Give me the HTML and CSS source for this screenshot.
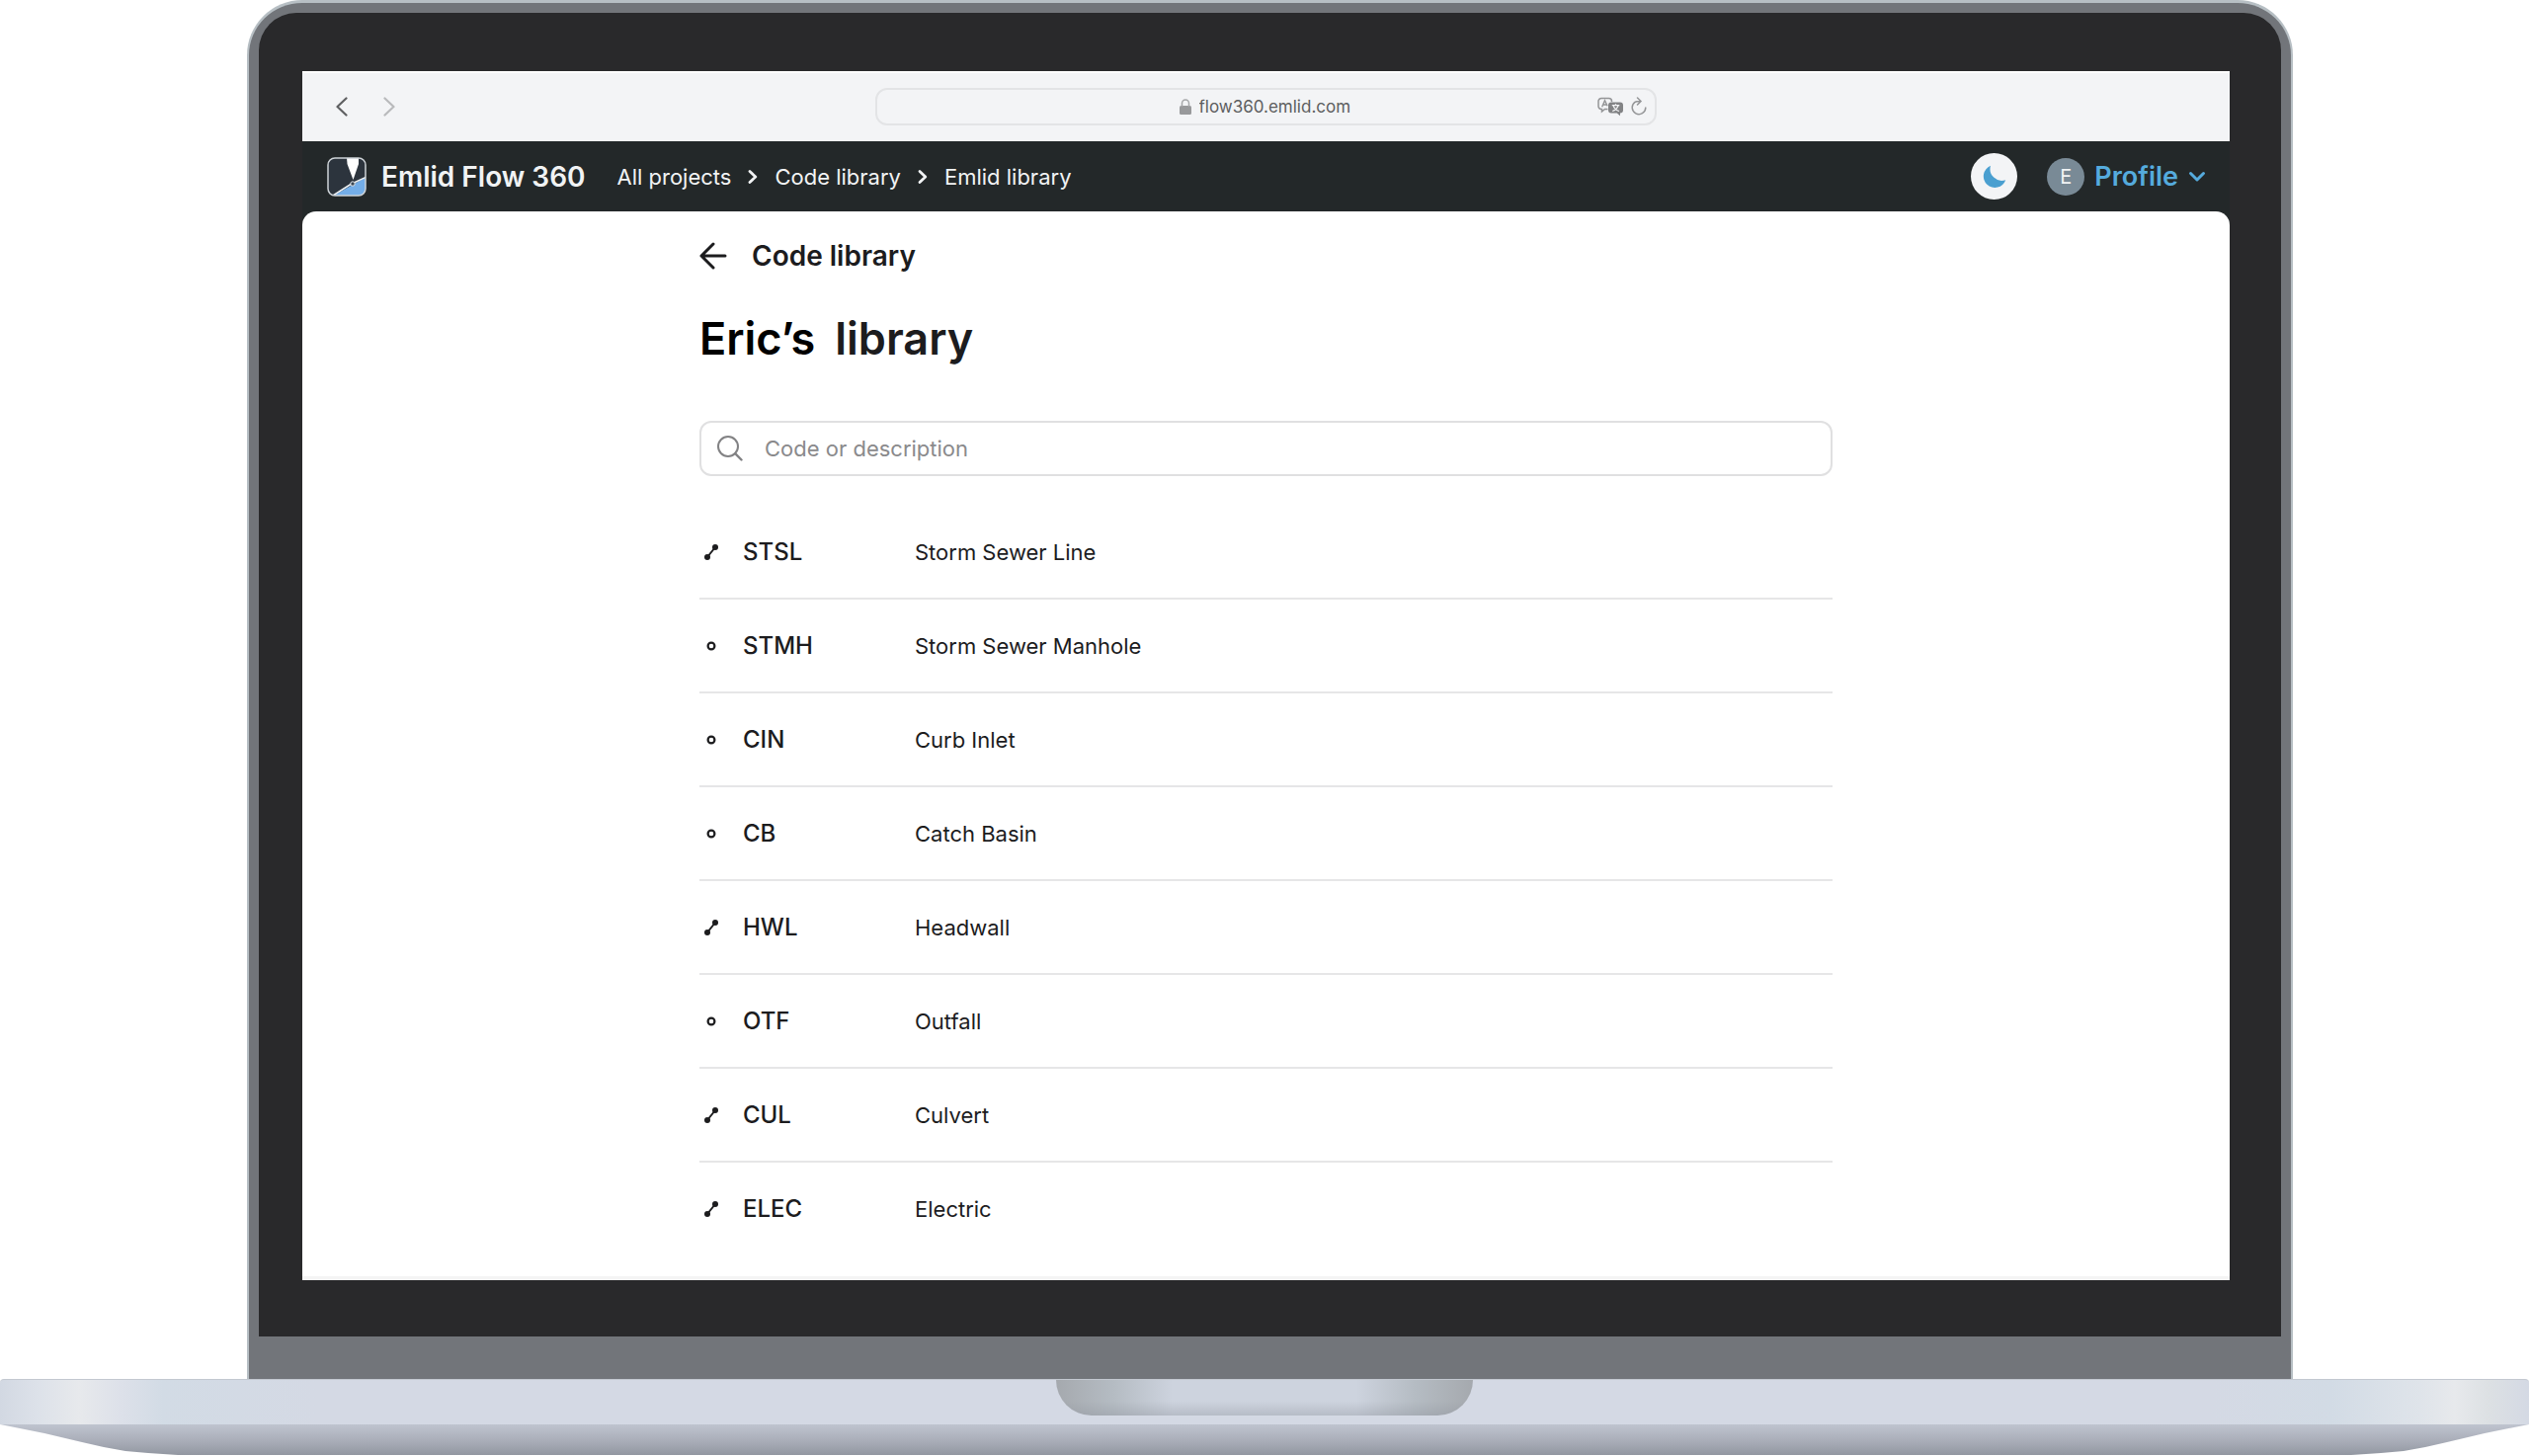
FILE: index.html
```html
<!DOCTYPE html>
<html lang="en">
<head>
<meta charset="utf-8">
<meta name="viewport" content="width=device-width, initial-scale=1">
<title>Emlid Flow 360</title>
<link rel="stylesheet" href="styles.css">
</head>
<body>
<svg width="0" height="0" class="sprite" aria-hidden="true">
  <symbol id="line" viewBox="0 0 16 18"><path d="M4 14 12 4" stroke="currentColor" stroke-width="2"/><circle cx="4" cy="14" r="3" fill="currentColor"/><circle cx="12" cy="4" r="3" fill="currentColor"/></symbol>
  <symbol id="point" viewBox="0 0 16 18"><circle cx="8" cy="9" r="3.4" fill="none" stroke="currentColor" stroke-width="2.2"/></symbol>
  <symbol id="next" viewBox="0 0 10 16"><path d="M2 2.5 7.8 8 2 13.5" fill="none" stroke="currentColor" stroke-width="2.8" stroke-linecap="round" stroke-linejoin="round"/></symbol>
</svg>
<div class="laptop">
  <div class="lid">
    <div class="bezel">
      <div class="screen">
        <div class="browser">
          <div class="history">
            <button type="button" aria-label="Back"><svg width="12" height="20" viewBox="0 0 12 20"><path d="M10.5 1.5 1.5 10l9 8.500" fill="none" stroke="#5f6062" stroke-width="2.2" stroke-linecap="round" stroke-linejoin="round"/></svg></button>
            <button type="button" aria-label="Forward"><svg width="12" height="20" viewBox="0 0 12 20"><path d="M1.500 1.500 10.500 10l-9 8.500" fill="none" stroke="#b9babc" stroke-width="2.2" stroke-linecap="round" stroke-linejoin="round"/></svg></button>
          </div>
          <div class="address">
            <div class="site">
              <svg width="12" height="16" viewBox="0 0 12 16"><rect y="7" width="12" height="9" rx="1.500" fill="#98999b"/><path d="M2.500 8V4.500a3.500 3.500 0 0 1 7 0V8" fill="none" stroke="#a6a7a9" stroke-width="1.500"/></svg>
              <input class="url" type="text" aria-label="Address" value="flow360.emlid.com">
            </div>
            <div class="tools">
              <button type="button" aria-label="Translate"><svg width="26" height="20" viewBox="0 0 26 20"><path d="M10.500 12.500H7.500L4.500 15v-2.500H4A3 3 0 0 1 1 9.500V4.500a3 3 0 0 1 3-3h7.500a3 3 0 0 1 3 3V5" fill="none" stroke="#949597" stroke-width="1.500"/><path d="m4.700 10.200 2.800-6.500 2.600 5.500M5.600 8h3.800" fill="none" stroke="#949597" stroke-width="1.400"/><path d="M14 5.500h9a3 3 0 0 1 3 3v5a3 3 0 0 1-3 3v2.700l-3.300-2.700H14a3 3 0 0 1-3-3v-5a3 3 0 0 1 3-3z" fill="#828385"/><path d="M14.800 8.700h7.500M18.500 7.200v1.500M21 9c-1 2.800-3 4.600-5.800 5.500M16.200 9.200c1 2.600 3 4.500 5.800 5.300" fill="none" stroke="#f3f4f6" stroke-width="1.200"/></svg></button>
              <button type="button" aria-label="Reload"><svg width="16" height="20" viewBox="0 0 16 20"><path d="M4 5.300A6.800 6.800 0 1 0 14.800 11M3.600 5.600C5 4.600 6.800 4.300 9.500 4.400M6.500 1l3.500 3.400L6.500 8" fill="none" stroke="#949597" stroke-width="1.500" stroke-linecap="round"/></svg></button>
            </div>
          </div>
        </div>
        <header class="appbar">
          <a class="brand" href="#">
            <svg width="40" height="40" viewBox="0 0 40 40"><defs><clipPath id="tile"><rect x="1" y="1" width="38" height="38" rx="7"/></clipPath></defs><g clip-path="url(#tile)"><path fill="#2c343d" d="M0 0h40v40H0z"/><path d="M40 20v20H5l21-12z" fill="#74aee8"/><path d="m6 39 18-11.500L40 20" fill="none" stroke="#eef2f5" stroke-width="1.500"/><path d="M20 0h12v7l-5.500 16L20.500 7z" fill="#fff"/></g><circle cx="26" cy="27" r="2.200" fill="#3a4652" stroke="#dfe5ea"/><rect x="1" y="1" width="38" height="38" rx="7" fill="none" stroke="#cdd2d6" stroke-width="1.500"/></svg>
            <span>Emlid Flow 360</span>
          </a>
          <nav class="crumbs" aria-label="Breadcrumb">
            <a href="#">All projects</a>
            <svg width="10" height="16"><use href="#next"/></svg>
            <a href="#">Code library</a>
            <svg width="10" height="16"><use href="#next"/></svg>
            <a href="#">Emlid library</a>
          </nav>
          <button class="theme" type="button" aria-label="Dark theme"><svg width="24" height="24" viewBox="0 0 24 24"><path d="M8 .8A11.500 11.500 0 1 0 23.200 15.200 11.800 11.800 0 0 1 8 .8z" fill="#4a9fd0"/></svg></button>
          <button class="profile" type="button">
            <span class="avatar">E</span>
            <span>Profile</span>
            <svg width="18" height="12" viewBox="0 0 18 12"><path d="m2.500 2.500 6.500 6.500 6.500-6.500" fill="none" stroke="currentColor" stroke-width="3" stroke-linecap="round" stroke-linejoin="round"/></svg>
          </button>
        </header>
        <main class="page">
          <div class="column">
            <a class="back" href="#">
              <svg width="28" height="28" viewBox="0 0 28 28"><path d="M26 14H2M14 2 2 14l12 12" fill="none" stroke="currentColor" stroke-width="3" stroke-linecap="round" stroke-linejoin="round"/></svg>
              <span>Code library</span>
            </a>
            <h1 class="title"><span class="owner">Eric’s</span> <span>library</span></h1>
            <label class="search">
              <svg width="26" height="26" viewBox="0 0 26 26"><circle cx="11" cy="11" r="10" fill="none" stroke="currentColor" stroke-width="2"/><path d="m18.200 18.200 6.300 6.300" stroke="currentColor" stroke-width="2.400" stroke-linecap="round"/></svg>
              <input type="search" aria-label="Code or description" placeholder="Code or description">
            </label>
            <table class="codes">
              <tbody>
                <tr><td class="kind"><svg width="16" height="18"><use href="#line"/></svg></td><th scope="row">STSL</th><td>Storm Sewer Line</td></tr>
                <tr><td class="kind"><svg width="16" height="18"><use href="#point"/></svg></td><th scope="row">STMH</th><td>Storm Sewer Manhole</td></tr>
                <tr><td class="kind"><svg width="16" height="18"><use href="#point"/></svg></td><th scope="row">CIN</th><td>Curb Inlet</td></tr>
                <tr><td class="kind"><svg width="16" height="18"><use href="#point"/></svg></td><th scope="row">CB</th><td>Catch Basin</td></tr>
                <tr><td class="kind"><svg width="16" height="18"><use href="#line"/></svg></td><th scope="row">HWL</th><td>Headwall</td></tr>
                <tr><td class="kind"><svg width="16" height="18"><use href="#point"/></svg></td><th scope="row">OTF</th><td>Outfall</td></tr>
                <tr><td class="kind"><svg width="16" height="18"><use href="#line"/></svg></td><th scope="row">CUL</th><td>Culvert</td></tr>
                <tr><td class="kind"><svg width="16" height="18"><use href="#line"/></svg></td><th scope="row">ELEC</th><td>Electric</td></tr>
              </tbody>
            </table>
          </div>
        </main>
      </div>
    </div>
  </div>
  <div class="deck"><div class="notch"></div></div>
  <div class="underside"></div>
</div>
</body>
</html>
```

FILE: styles.css
```css
*, *::before, *::after { box-sizing: border-box; }

body {
  margin: 0;
  background: #fff;
  color: #1c1c1e;
  font-family: Inter, "Liberation Sans", sans-serif;
  font-size: 22px;
  line-height: 28px;
}

.sprite { display: none; }
svg { display: block; flex: none; }
a { color: inherit; text-decoration: none; }
button, input { font: inherit; color: inherit; border: 0; padding: 0; background: none; }
input:focus { outline: none; }

/* Laptop shell */
.lid {
  margin: 0 239px 0 250px;
  padding: 10px 10px 43px;
  background: #72757a;
  border: solid #b7bfc4;
  border-width: 3px 2px 0;
  border-radius: 56px 56px 0 0;
}

.bezel {
  padding: 59px 52px 57px 44px;
  background: #29292b;
  border-radius: 38px 38px 0 0;
}

.screen { background: #232829; }

.deck {
  display: flex;
  justify-content: center;
  height: 46px;
  border-top: 1px solid #c3c8d0;
  border-radius: 4px 4px 0 0;
  background: linear-gradient(90deg, #d2d8e2 0, #dce1e9 36px, #e7e9ec 80px, #dce0e9 125px, #d2dbe5 165px, #d4d9e4 320px, #d4d9e4 calc(100% - 320px), #d2dbe5 calc(100% - 200px), #dfe4ea calc(100% - 110px), #e7e9ec calc(100% - 75px), #dce0e3 calc(100% - 40px), #d4d9e4 100%);
}

.notch {
  width: 422px;
  height: 36px;
  border-radius: 0 0 36px 36px;
  background:
    linear-gradient(180deg, transparent 60%, rgba(140, 145, 155, .35)),
    linear-gradient(90deg, #a5a9ae, #b5bcc3 14%, #cdd3de 28%, #cdd3de 72%, #b5bcc3 86%, #a5a9ae);
}

.underside {
  height: 31px;
  background: linear-gradient(#bfc4cf, #a9adb8 55%, #9297a1);
  clip-path: polygon(0 0, 100% 0, calc(100% - 45px) 9px, calc(100% - 83px) 18px, calc(100% - 105px) 23px, calc(100% - 127px) 27px, calc(100% - 150px) 29px, calc(100% - 180px) 100%, 180px 100%, 150px 29px, 127px 27px, 105px 23px, 83px 18px, 45px 9px);
}

/* Browser bar */
.browser {
  display: grid;
  grid-template-columns: 1fr minmax(300px, 791px) 1fr;
  align-items: center;
  height: 71px;
  padding-bottom: 2px;
  border-top: 2px solid #fff;
  background: #f3f4f6;
}

.history { display: flex; gap: 36px; padding-left: 34px; }

.address {
  display: grid;
  grid-template-columns: 1fr auto 1fr;
  grid-column: 2;
  align-items: center;
  height: 38px;
  padding: 0 8px;
  border: 2px solid #e3e4e6;
  border-radius: 12px;
}

.site { display: flex; align-items: center; gap: 8px; grid-column: 2; color: #5d5e60; }
.url { width: 156px; font-size: 17px; line-height: 24px; }
.tools { display: flex; justify-content: flex-end; gap: 8px; }

/* App header */
.appbar {
  display: flex;
  align-items: center;
  height: 71px;
  padding: 0 24px 0 25px;
  color: #f1f3f4;
}

.brand { display: flex; align-items: center; gap: 15px; font-size: 28px; font-weight: 600; }
.crumbs { display: flex; align-items: center; gap: 17px; margin-left: 32px; }

.theme {
  display: grid;
  place-items: center;
  width: 47px;
  height: 47px;
  margin-left: auto;
  border-radius: 50%;
  background: #f3f4f6;
}

.profile {
  display: flex;
  align-items: center;
  gap: 10px;
  margin-left: 30px;
  color: #55abdd;
  font-size: 27px;
  font-weight: 600;
}

.avatar {
  display: grid;
  place-items: center;
  width: 38px;
  height: 38px;
  border-radius: 50%;
  background: #798a96;
  color: #f1f3f4;
  font-size: 20px;
  font-weight: 400;
}

/* Library page */
.page {
  padding: 28px 32px 20px;
  border-bottom: 4px solid #f4f4f4;
  border-radius: 14px 14px 0 0;
  background: #fff;
}

.column { max-width: 1147px; margin: 0 auto; }
.back { display: inline-flex; align-items: center; gap: 25px; height: 34px; font-size: 28px; font-weight: 600; }

.title {
  display: flex;
  gap: 20px;
  margin: 37px 0 56px;
  font-size: 45px;
  font-weight: 600;
  line-height: 54px;
}

.owner { color: #000; }

.search {
  display: flex;
  align-items: center;
  gap: 22px;
  height: 56px;
  padding: 0 16px;
  border: 2px solid #e0e0e1;
  border-radius: 12px;
  color: #828284;
}

.search input { flex: 1; min-width: 0; appearance: none; }
.search input::placeholder { color: #8a8a8c; opacity: 1; }

.codes { width: 100%; margin-top: 30px; border-collapse: separate; border-spacing: 0; }
.codes tr > * { height: 95px; padding: 0; border-bottom: 2px solid #e6e6e7; text-align: left; }
.codes tr:last-child > * { border-bottom-color: transparent; }
.codes .kind { width: 44px; padding-left: 4px; }
.codes th { width: 174px; font-size: 24px; font-weight: 500; }
```
